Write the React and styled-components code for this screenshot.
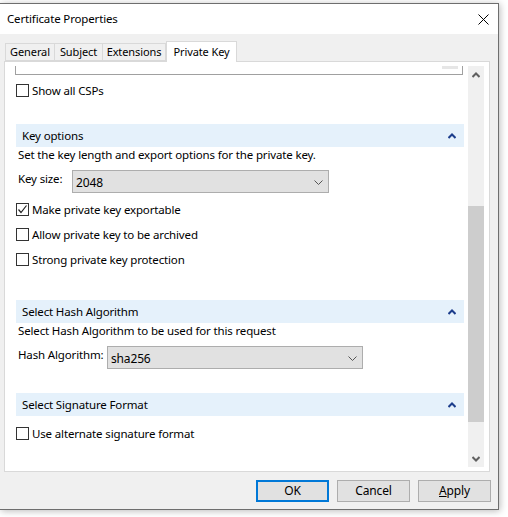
import React from "react";
import styled, { createGlobalStyle } from "styled-components";

const GlobalStyle = createGlobalStyle`
  html, body {
    margin: 0;
    padding: 0;
    background: #ffffff;
  }
  body {
    font-family: "Noto Sans", "Open Sans", sans-serif;
    font-size: 11.5px;
    letter-spacing: -0.15px;
    color: #000;
  }
`;

const Desktop = styled.div`
  width: 508px;
  height: 517px;
  overflow: hidden;
  padding-top: 3px;
  box-sizing: border-box;
  background: #ffffff;
`;

const Window = styled.div`
  width: 499px;
  height: 507px;
  box-sizing: border-box;
  border: 1px solid #6e6e6e;
  border-left: none;
  background: #f0f0f0;
  box-shadow: 1px 1px 7px rgba(0, 0, 0, 0.28);
  display: flex;
  flex-direction: column;
`;

const TitleBar = styled.div`
  height: 30px;
  background: #ffffff;
  display: flex;
  align-items: center;
  justify-content: space-between;
  padding: 0 9px 0 7px;
`;

const Title = styled.span`
  font-size: 11.5px;
  line-height: 16px;
`;

const Body = styled.div`
  flex: 1;
  padding: 7px 0 0 4px;
  display: flex;
  flex-direction: column;
`;

const TabStrip = styled.div`
  display: flex;
  align-items: flex-end;
  height: 20px;
  padding-left: 1px;
  position: relative;
  z-index: 1;
`;

const Tab = styled.div`
  box-sizing: border-box;
  width: ${(p) => p.$width}px;
  height: ${(p) => (p.$active ? "21px" : "18px")};
  margin-bottom: ${(p) => (p.$active ? "-1px" : "0")};
  border: 1px solid #d9d9d9;
  border-bottom: ${(p) => (p.$active ? "none" : "1px solid #d9d9d9")};
  border-left: ${(p) => (p.$first || p.$active ? "1px solid #d9d9d9" : "none")};
  background: ${(p) => (p.$active ? "#ffffff" : "#f0f0f0")};
  display: flex;
  align-items: center;
  justify-content: center;
  padding-bottom: ${(p) => (p.$active ? "1px" : "0")};
  line-height: 16px;
  font-size: 11px;
  letter-spacing: -0.1px;
  white-space: nowrap;
`;

const Panel = styled.div`
  width: 486px;
  height: 411px;
  box-sizing: border-box;
  border: 1px solid #d9d9d9;
  background: #ffffff;
  padding: 4px 5px 4px 5px;
`;

const ScrollView = styled.div`
  display: flex;
  height: 401px;
`;

const Content = styled.div`
  width: 458px;
  overflow: hidden;
  display: flex;
  flex-direction: column;
`;

const ListFragment = styled.div`
  position: relative;
  margin-left: 5px;
  width: 448px;
  height: 9px;
  box-sizing: border-box;
  border: 1px solid #a0a0a0;
  border-top: none;
  flex: none;
`;

const ListThumb = styled.div`
  position: absolute;
  right: 4px;
  top: 0;
  width: 16px;
  height: 3px;
  background: #e6e6e6;
`;

const CheckRow = styled.label`
  display: flex;
  align-items: center;
  height: 13px;
  margin-left: 6px;
  margin-top: ${(p) => p.$gap}px;
  line-height: 16px;
  white-space: nowrap;
  flex: none;
`;

const Box = styled.span`
  width: 13px;
  height: 13px;
  box-sizing: border-box;
  border: 1px solid #333333;
  background: #ffffff;
  margin-right: 3px;
  display: flex;
  align-items: center;
  justify-content: center;
  flex: none;
`;

const SectionHeader = styled.div`
  margin-left: 6px;
  margin-top: ${(p) => p.$gap}px;
  width: 448px;
  height: 23px;
  box-sizing: border-box;
  background: #e5f1fb;
  display: flex;
  align-items: center;
  justify-content: space-between;
  padding: 0 8px 0 6px;
  line-height: 16px;
  flex: none;
`;

const Description = styled.div`
  margin-left: 8px;
  line-height: 16px;
  height: 16px;
  white-space: nowrap;
  flex: none;
`;

const FieldRow = styled.div`
  display: flex;
  align-items: flex-start;
  margin-left: 8px;
  margin-top: ${(p) => p.$gap}px;
  flex: none;
`;

const FieldLabel = styled.span`
  width: ${(p) => p.$width}px;
  line-height: 16px;
  padding-top: 1px;
  white-space: nowrap;
  flex: none;
`;

const Combo = styled.div`
  width: ${(p) => p.$width}px;
  height: 23px;
  box-sizing: border-box;
  border: 1px solid #adadad;
  background: #e1e1e1;
  display: flex;
  align-items: center;
  justify-content: space-between;
  padding: 2px 5px 0 3px;
  line-height: 16px;
  font-size: 12px;
`;

const ScrollTrack = styled.div`
  width: 16px;
  background: #f0f0f0;
  display: flex;
  flex-direction: column;
  align-items: center;
`;

const ScrollArrow = styled.div`
  height: 17px;
  width: 16px;
  display: flex;
  align-items: center;
  justify-content: center;
  flex: none;
`;

const ScrollThumb = styled.div`
  width: 16px;
  background: #cdcdcd;
  flex: none;
`;

const ScrollSpacer = styled.div`
  flex: 1;
`;

const ButtonRow = styled.div`
  display: flex;
  justify-content: flex-end;
  gap: 8px;
  padding-right: 7px;
  margin-top: 8px;
`;

const Button = styled.div`
  width: 73px;
  height: 22px;
  box-sizing: border-box;
  border: ${(p) => (p.$default ? "2px solid #0078d7" : "1px solid #adadad")};
  background: #e1e1e1;
  display: flex;
  align-items: center;
  justify-content: center;
  line-height: 16px;
  font-size: 12px;
`;

const Underline = styled.span`
  text-decoration: underline;
`;

const CloseIcon = () => (
  <svg width="11" height="11" viewBox="0 0 11 11">
    <path d="M0.5 0.5 L10.5 10.5 M10.5 0.5 L0.5 10.5" stroke="#000" strokeWidth="1" />
  </svg>
);

const CollapseIcon = () => (
  <svg width="8" height="6" viewBox="0 0 8 6">
    <path d="M0.5 5 L4 1.5 L7.5 5" stroke="#1c3d8c" strokeWidth="2" fill="none" />
  </svg>
);

const DropIcon = () => (
  <svg width="9" height="5" viewBox="0 0 9 5">
    <path d="M0.5 0.5 L4.5 4.5 L8.5 0.5" stroke="#555" strokeWidth="1" fill="none" />
  </svg>
);

const ArrowIcon = ({ down }) => (
  <svg width="8" height="6" viewBox="0 0 8 6">
    <path
      d={down ? "M0.5 1 L4 4.5 L7.5 1" : "M0.5 5 L4 1.5 L7.5 5"}
      stroke="#606060"
      strokeWidth="2"
      fill="none"
    />
  </svg>
);

const CheckIcon = () => (
  <svg width="11" height="11" viewBox="0 0 11 11">
    <path d="M1.5 5.5 L4 8.5 L9.5 1.5" stroke="#222" strokeWidth="1.2" fill="none" />
  </svg>
);

const Check = ({ label, checked, gap }) => (
  <CheckRow $gap={gap}>
    <Box>{checked && <CheckIcon />}</Box>
    {label}
  </CheckRow>
);

const Section = ({ title, gap }) => (
  <SectionHeader $gap={gap}>
    {title}
    <CollapseIcon />
  </SectionHeader>
);

const tabs = [
  { label: "General", width: 50 },
  { label: "Subject", width: 48 },
  { label: "Extensions", width: 63 },
  { label: "Private Key", width: 71, active: true },
];

export default function App() {
  return (
    <>
      <GlobalStyle />
      <Desktop>
        <Window>
          <TitleBar>
            <Title>Certificate Properties</Title>
            <CloseIcon />
          </TitleBar>
          <Body>
            <TabStrip>
              {tabs.map((t, i) => (
                <Tab key={t.label} $first={i === 0} $active={t.active} $width={t.width}>
                  {t.label}
                </Tab>
              ))}
            </TabStrip>
            <Panel>
              <ScrollView>
                <Content>
                  <ListFragment>
                    <ListThumb />
                  </ListFragment>
                  <Check label="Show all CSPs" gap={9} />

                  <Section title="Key options" gap={27} />
                  <Description>Set the key length and export options for the private key.</Description>
                  <FieldRow $gap={7}>
                    <FieldLabel $width={54}>Key size:</FieldLabel>
                    <Combo $width={257}>
                      2048
                      <DropIcon />
                    </Combo>
                  </FieldRow>
                  <Check label="Make private key exportable" checked gap={10} />
                  <Check label="Allow private key to be archived" gap={12} />
                  <Check label="Strong private key protection" gap={12} />

                  <Section title="Select Hash Algorithm" gap={34} />
                  <Description>Select Hash Algorithm to be used for this request</Description>
                  <FieldRow $gap={7}>
                    <FieldLabel $width={89}>Hash Algorithm:</FieldLabel>
                    <Combo $width={256}>
                      sha256
                      <DropIcon />
                    </Combo>
                  </FieldRow>

                  <Section title="Select Signature Format" gap={24} />
                  <Check label="Use alternate signature format" gap={11} />
                </Content>
                <ScrollTrack>
                  <ScrollArrow>
                    <ArrowIcon />
                  </ScrollArrow>
                  <ScrollThumb style={{ marginTop: 123, height: 216 }} />
                  <ScrollSpacer />
                  <ScrollArrow>
                    <ArrowIcon down />
                  </ScrollArrow>
                </ScrollTrack>
              </ScrollView>
            </Panel>
            <ButtonRow>
              <Button $default>OK</Button>
              <Button>Cancel</Button>
              <Button>
                <Underline>A</Underline>pply
              </Button>
            </ButtonRow>
          </Body>
        </Window>
      </Desktop>
    </>
  );
}
